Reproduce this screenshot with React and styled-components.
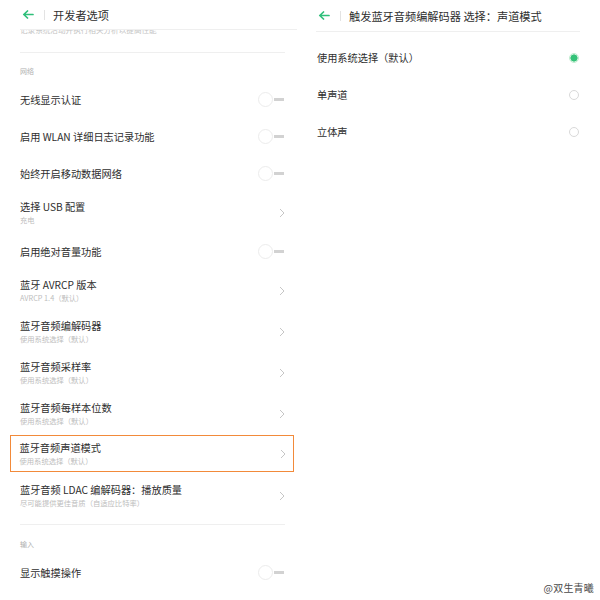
import styled, { createGlobalStyle } from "styled-components";

const GlobalStyle = createGlobalStyle`
  body {
    margin: 0;
    background: #fff;
    font-family: "Noto Sans CJK SC", "Noto Sans", sans-serif;
  }
`;

const Screen = styled.div`
  position: relative;
  width: 600px;
  height: 600px;
  display: flex;
  overflow: hidden;
  background: #fff;
`;

const Panel = styled.div`
  width: ${(p) => p.$width}px;
  display: flex;
  flex-direction: column;
  flex-shrink: 0;
`;

const Header = styled.div`
  height: ${(p) => p.$height}px;
  box-sizing: border-box;
  display: flex;
  align-items: center;
  margin: 0 ${(p) => p.$inset}px 0 ${(p) => p.$start}px;
  padding-left: 2px;
  border-bottom: 1px solid #efefef;
`;

const Separator = styled.span`
  width: 1px;
  height: 10px;
  background: #e3e3e3;
  margin: 0 8px 0 10px;
`;

const Title = styled.span`
  font-size: 11.2px;
  color: #2e2e2e;
  white-space: nowrap;
`;

const NoteClip = styled.div`
  height: 5px;
  overflow: hidden;
  margin: 0 0 17px 20px;
`;

const Note = styled.div`
  font-size: 7.6px;
  line-height: 10px;
  margin-top: -5px;
  color: #c4c4c4;
  white-space: nowrap;
`;

const Divider = styled.div`
  height: 1px;
  background: #efefef;
  margin: ${(p) => p.$top || 0}px 12px 0 20px;
`;

const SectionLabel = styled.div`
  padding: ${(p) => p.$top || 12}px 20px 4px;
  font-size: 7px;
  line-height: 12px;
  color: #b0b0b0;
`;

const Row = styled.div`
  box-sizing: border-box;
  height: ${(p) => (p.$tall ? 41 : 37)}px;
  display: flex;
  align-items: center;
  justify-content: space-between;
  padding: 0 12px 0 20px;

  ${(p) =>
    p.$highlight &&
    `
    height: 37px;
    margin: 1px 3px 3px 10px;
    padding: 0 7.5px 0 8.5px;
    border: 1.5px solid #f28a3a;
  `}
`;

const TextBlock = styled.div`
  display: flex;
  flex-direction: column;
`;

const RowTitle = styled.span`
  font-size: 10.2px;
  line-height: 13px;
  color: #2e2e2e;
  white-space: nowrap;
`;

const RowSub = styled.span`
  font-size: 7.3px;
  line-height: 10px;
  margin-top: 1.5px;
  color: #bdbdbd;
  white-space: nowrap;
`;

const Toggle = styled.div`
  display: flex;
  align-items: center;
  margin-right: 1px;

  &::before {
    content: "";
    width: 13px;
    height: 13px;
    border-radius: 50%;
    border: 1px solid #ececec;
  }

  &::after {
    content: "";
    width: 10px;
    height: 3px;
    margin-left: 1px;
    background: #d2d2d2;
  }
`;

const RadioList = styled.div`
  padding-top: 7px;
`;

const RadioRow = styled.div`
  height: 37px;
  display: flex;
  align-items: center;
  justify-content: space-between;
  padding: 0 21px 0 20px;
`;

const Radio = styled.span`
  box-sizing: border-box;
  width: 10px;
  height: 10px;
  border-radius: 50%;
  border: 1px solid ${(p) => (p.$checked ? "#bfeccf" : "#d9d9d9")};
  background: ${(p) =>
    p.$checked ? "radial-gradient(circle, #34c278 0 3.3px, #d6f4e2 3.8px)" : "#fff"};
`;

const Watermark = styled.div`
  position: absolute;
  right: 6px;
  bottom: 5px;
  font-size: 10px;
  color: #4a4a4a;
  letter-spacing: 0.2px;
`;

const BackArrow = () => (
  <svg width="12" height="9" viewBox="0 0 12 9">
    <path
      d="M11 4.5H2 M5.5 1 L1.8 4.5 L5.5 8"
      fill="none"
      stroke="#2fbf7a"
      strokeWidth="1.7"
      strokeLinecap="round"
      strokeLinejoin="round"
    />
  </svg>
);

const Chevron = () => (
  <svg width="6" height="10" viewBox="0 0 6 10">
    <polyline points="1,1 5,5 1,9" fill="none" stroke="#c6c6c6" strokeWidth="1" />
  </svg>
);

const network = [
  { title: "无线显示认证", toggle: true },
  { title: "启用 WLAN 详细日志记录功能", toggle: true },
  { title: "始终开启移动数据网络", toggle: true },
  { title: "选择 USB 配置", sub: "充电" },
  { title: "启用绝对音量功能", toggle: true },
  { title: "蓝牙 AVRCP 版本", sub: "AVRCP 1.4（默认）" },
  { title: "蓝牙音频编解码器", sub: "使用系统选择（默认）" },
  { title: "蓝牙音频采样率", sub: "使用系统选择（默认）" },
  { title: "蓝牙音频每样本位数", sub: "使用系统选择（默认）" },
  { title: "蓝牙音频声道模式", sub: "使用系统选择（默认）", highlight: true },
  { title: "蓝牙音频 LDAC 编解码器：播放质量", sub: "尽可能提供更佳音质（自适应比特率）" },
];

const channelModes = [
  { label: "使用系统选择（默认）", checked: true },
  { label: "单声道" },
  { label: "立体声" },
];

const SettingRow = ({ item }) => (
  <Row $tall={!!item.sub} $highlight={item.highlight}>
    <TextBlock>
      <RowTitle>{item.title}</RowTitle>
      {item.sub && <RowSub>{item.sub}</RowSub>}
    </TextBlock>
    {item.toggle ? <Toggle /> : <Chevron />}
  </Row>
);

export default function App() {
  return (
    <>
      <GlobalStyle />
      <Screen>
        <Panel $width={297}>
          <Header $height={30} $start={20} $inset={0}>
            <BackArrow />
            <Separator />
            <Title>开发者选项</Title>
          </Header>
          <NoteClip>
            <Note>记录系统活动并执行相关分析以提高性能</Note>
          </NoteClip>
          <Divider />
          <SectionLabel>网络</SectionLabel>
          {network.map((item) => (
            <SettingRow key={item.title} item={item} />
          ))}
          <Divider $top={8} />
          <SectionLabel $top={13}>输入</SectionLabel>
          <SettingRow item={{ title: "显示触摸操作", toggle: true }} />
        </Panel>

        <Panel $width={303}>
          <Header $height={32} $start={19} $inset={20}>
            <BackArrow />
            <Separator />
            <Title>触发蓝牙音频编解码器 选择：声道模式</Title>
          </Header>
          <RadioList>
            {channelModes.map((m) => (
              <RadioRow key={m.label}>
                <RowTitle>{m.label}</RowTitle>
                <Radio $checked={m.checked} />
              </RadioRow>
            ))}
          </RadioList>
        </Panel>

        <Watermark>@双生青曦</Watermark>
      </Screen>
    </>
  );
}
